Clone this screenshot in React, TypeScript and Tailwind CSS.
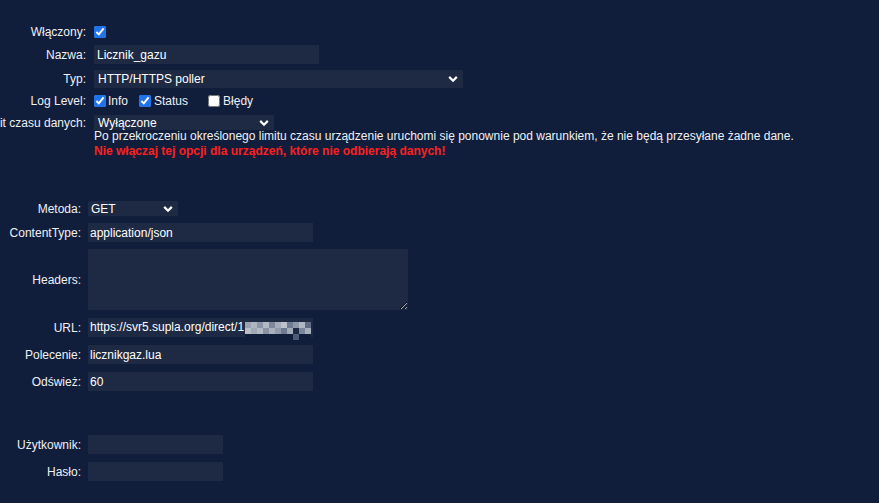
import { ReactNode } from "react";

function Chevron() {
  return (
    <svg
      className="pointer-events-none absolute right-[5px] top-1/2 -translate-y-1/2"
      width="10"
      height="7"
      viewBox="0 0 10 7"
      fill="none"
    >
      <path d="M1.2 1.4 5 5.2 8.8 1.4" stroke="#ffffff" strokeWidth="2.2" />
    </svg>
  );
}

function Select({
  value,
  width,
  height = "h-[15px]",
  pad = "pl-[4px]",
}: {
  value: string;
  width: string;
  height?: string;
  pad?: string;
}) {
  return (
    <div className={`relative ${width} ${height} bg-[#1e2a44] flex items-center ${pad}`}>
      <span className="text-white">{value}</span>
      <Chevron />
    </div>
  );
}

function Field({
  value,
  width,
  pad = "pl-[2px]",
  children,
}: {
  value?: string;
  width: string;
  pad?: string;
  children?: ReactNode;
}) {
  return (
    <div className={`${width} h-[19px] bg-[#1e2a44] flex items-center ${pad} text-white whitespace-nowrap`}>
      {value}
      {children}
    </div>
  );
}

function Row({
  label,
  labelW,
  gap,
  className = "",
  children,
}: {
  label: string;
  labelW: string;
  gap: string;
  className?: string;
  children: ReactNode;
}) {
  return (
    <div className={`flex items-center ${gap} ${className}`}>
      <div className={`${labelW} shrink-0 flex justify-end whitespace-nowrap`}>
        <span>{label}</span>
      </div>
      {children}
    </div>
  );
}

function Check({ checked }: { checked: boolean }) {
  return (
    <input
      type="checkbox"
      defaultChecked={checked}
      className="m-0 w-[12px] h-[12px] accent-[#1f74ec]"
    />
  );
}

// pixelated (censored) part of the URL
const MOSAIC = [
  ["#9aa2b2", "#aeb4c0", "#8c95a7", "#b4bac5", "#7d889d", "#a6adba", "#bcc1cb", "#6f7b92", "#8f98a9", "#b0b6c2", "#5f6c86"],
  ["#b8bdc8", "#a1a8b6", "#b3b9c4", "#8a93a5", "#aab0bd", "#939bab", "#6e7a91", "#a4abb8", "#1e2a44", "#7b869b", "#a8afbc"],
  ["#111e3b", "#111e3b", "#111e3b", "#111e3b", "#111e3b", "#111e3b", "#111e3b", "#111e3b", "#4d5a75", "#111e3b", "#111e3b"],
];

function Mosaic() {
  return (
    <span className="inline-flex flex-col ml-[1px] mt-[4px]">
      {MOSAIC.map((r, i) => (
        <span key={i} className="flex">
          {r.map((c, j) => (
            <span key={j} className="w-[6px] h-[6px]" style={{ background: c }} />
          ))}
        </span>
      ))}
    </span>
  );
}

export default function App() {
  const l1 = "w-[86px]";
  const l2 = "w-[81px]";
  return (
    <div
      className="w-[879px] h-[503px] overflow-hidden bg-[#111e3b] text-[12px] text-[#eef0f4] leading-[14px]"
      style={{ fontFamily: '"Liberation Sans", Arial, sans-serif' }}
    >
      {/* Device section */}
      <div className="flex flex-col pt-[24px]">
        <Row label="Włączony:" labelW={l1} gap="gap-[8px]" className="h-[15px]">
          <Check checked />
        </Row>
        <Row label="Nazwa:" labelW={l1} gap="gap-[8px]" className="mt-[6px]">
          <Field value="Licznik_gazu" width="w-[225px]" pad="pl-[3px]" />
        </Row>
        <Row label="Typ:" labelW={l1} gap="gap-[8px]" className="mt-[6px]">
          <Select value="HTTP/HTTPS poller" width="w-[369px]" height="h-[18px]" />
        </Row>
        <Row label="Log Level:" labelW={l1} gap="gap-[8px]" className="mt-[5px] h-[15px]">
          <div className="flex items-center">
            <Check checked />
            <span className="ml-[2px]">Info</span>
            <span className="ml-[11px] flex items-center">
              <Check checked />
            </span>
            <span className="ml-[3px]">Status</span>
            <span className="ml-[20px] flex items-center">
              <Check checked={false} />
            </span>
            <span className="ml-[3px]">Błędy</span>
          </div>
        </Row>
        <Row label="Limit czasu danych:" labelW={l1} gap="gap-[8px]" className="mt-[7px]">
          <Select value="Wyłączone" width="w-[180px]" />
        </Row>
        <div className="ml-[94px] -mt-[1px] leading-[15px]">
          <div>
            Po przekroczeniu określonego limitu czasu urządzenie uruchomi się ponownie pod warunkiem, że nie będą przesyłane żadne dane.
          </div>
          <div className="font-bold text-[#ff1f1f]">
            Nie włączaj tej opcji dla urządzeń, które nie odbierają danych!
          </div>
        </div>
      </div>

      {/* HTTP section */}
      <div className="flex flex-col mt-[42px]">
        <Row label="Metoda:" labelW={l2} gap="gap-[7px]">
          <Select value="GET" width="w-[90px]" pad="pl-[3px]" />
        </Row>
        <Row label="ContentType:" labelW={l2} gap="gap-[7px]" className="mt-[7px]">
          <Field value="application/json" width="w-[225px]" />
        </Row>
        <Row label="Headers:" labelW={l2} gap="gap-[7px]" className="mt-[7px]">
          <textarea className="m-0 block w-[320px] h-[61px] bg-[#1e2a44] border-0 outline-none text-white resize" />
        </Row>
        <Row label="URL:" labelW={l2} gap="gap-[7px]" className="mt-[8px]">
          <Field width="w-[225px]">
            <span className="flex items-start h-[19px]">
              <span className="pt-[2px]">https://svr5.supla.org/direct/1</span>
              <Mosaic />
            </span>
          </Field>
        </Row>
        <Row label="Polecenie:" labelW={l2} gap="gap-[7px]" className="mt-[8px]">
          <Field value="licznikgaz.lua" width="w-[225px]" />
        </Row>
        <Row label="Odśwież:" labelW={l2} gap="gap-[7px]" className="mt-[8px]">
          <Field value="60" width="w-[225px]" />
        </Row>
        <Row label="Użytkownik:" labelW={l2} gap="gap-[7px]" className="mt-[44px]">
          <Field width="w-[135px]" />
        </Row>
        <Row label="Hasło:" labelW={l2} gap="gap-[7px]" className="mt-[8px]">
          <Field width="w-[135px]" />
        </Row>
      </div>
    </div>
  );
}
